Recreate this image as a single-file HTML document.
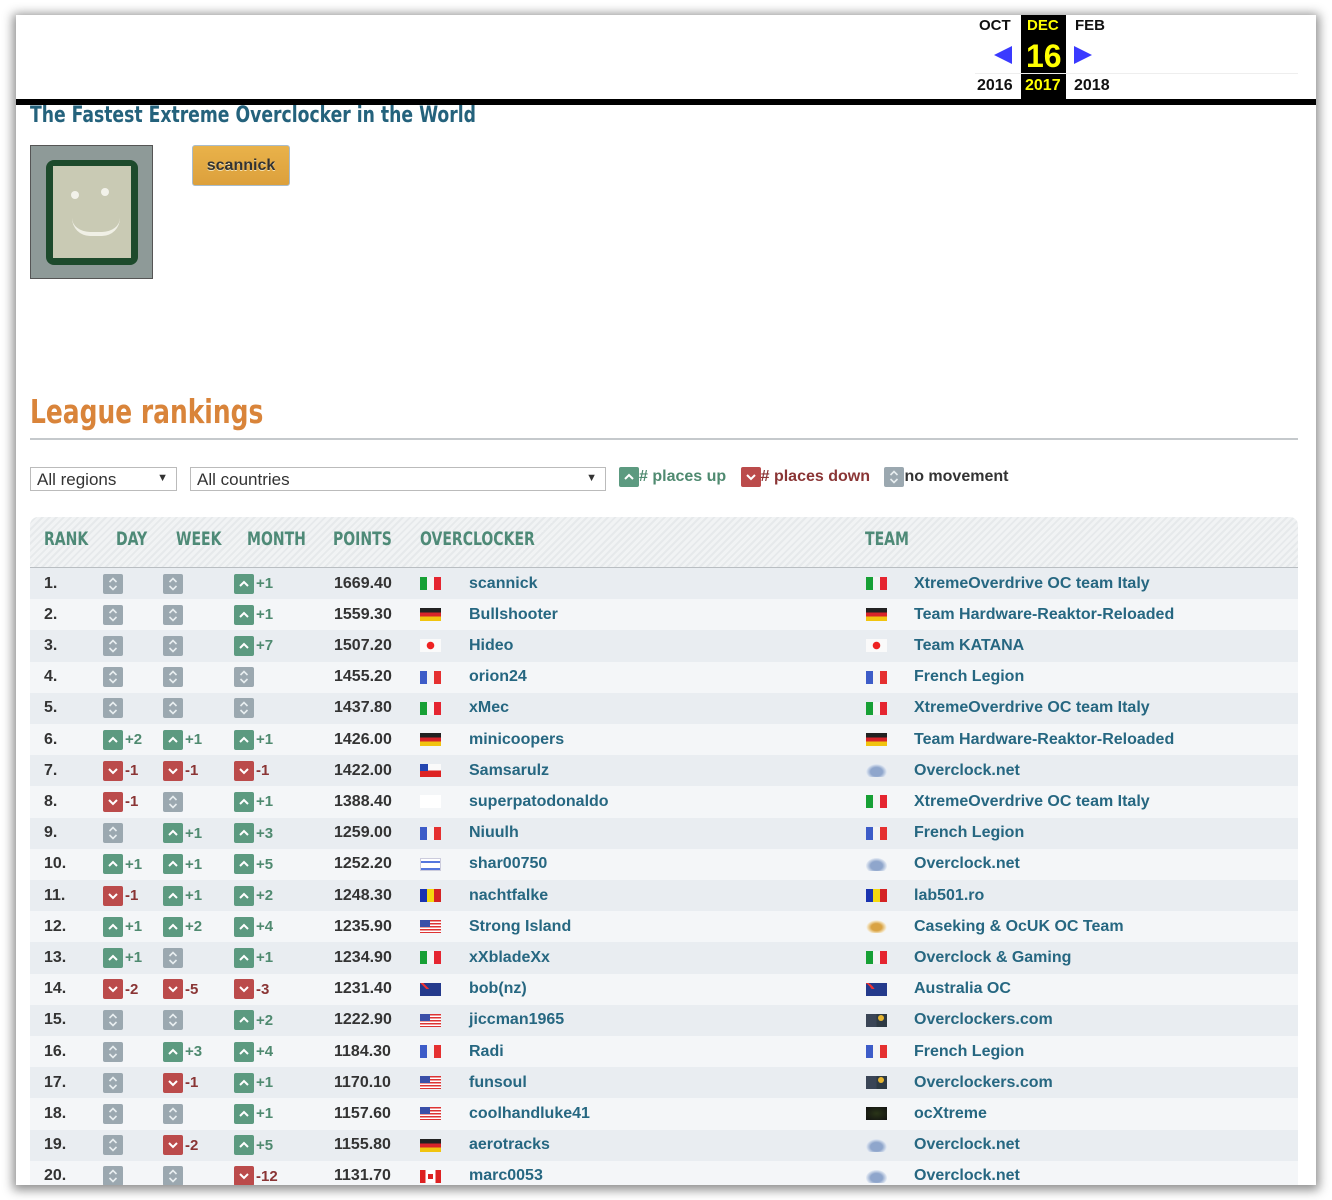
<!DOCTYPE html>
<html><head><meta charset="utf-8"><style>
*{box-sizing:border-box;margin:0;padding:0}
body{width:1332px;height:1200px;background:#fff;position:relative;overflow:hidden;font-family:"Liberation Sans",sans-serif}
.card{position:absolute;left:16px;top:15px;width:1300px;height:1170px;background:#fff;box-shadow:0 2px 10px 3px rgba(0,0,0,.45);overflow:hidden}
.a{position:absolute}
.cond{font-family:"DejaVu Sans Condensed","DejaVu Sans",sans-serif;font-weight:bold;transform-origin:left top;white-space:nowrap}
.hd{font-size:19px;color:#4e8a77;transform:scaleX(.82);top:513px}
.row{position:absolute;left:14px;width:1268px;height:31.2px;font-size:16px;font-weight:bold;color:#333}
.row>*{position:absolute;top:50%;transform:translateY(-50%);white-space:nowrap}
.row>.fl{top:9px;transform:none}
.odd{background:#e9edf1}.even{background:#f4f6f8}
.ic{width:20px;height:20px;border-radius:2px;display:inline-block;vertical-align:middle}
.n{background:#9ba8b0}.u{background:#5c9a80}.d{background:#bb4b4b}
.ic svg{display:block}
.dt{font-size:15px;font-weight:bold;margin-left:2px;vertical-align:middle}
.up{color:#4f8a70}.dn{color:#8a3535}
.lk{color:#266781}
.fl{width:21px;height:13px;display:block}
.it{background:linear-gradient(90deg,#17a035 33%,#f4f4f4 33% 66%,#e52530 66%)}
.de{background:linear-gradient(#222 33%,#d8242a 33% 66%,#f1c40f 66%)}
.jp{background:radial-gradient(circle,#e22 3.5px,#fafafa 4px)}
.fr{background:linear-gradient(90deg,#3d5cc8 33%,#f4f4f4 33% 66%,#e53030 66%)}
.cl{background:linear-gradient(#fafafa 50%,#d22 50%)}
.cl::before{content:"";position:absolute;left:0;top:0;width:8px;height:7px;background:#2345b0}
.il{background:linear-gradient(#fff 2px,#5577dd 2px 4px,#fff 4px 9px,#5577dd 9px 11px,#fff 11px);border:1px solid #ccd}
.ro{background:linear-gradient(90deg,#1a33b0 33%,#f5d90f 33% 66%,#d42323 66%)}
.us{background:repeating-linear-gradient(#d33 0 1.5px,#fff 1.5px 3px)}
.us::before{content:"";position:absolute;left:0;top:0;width:10px;height:7px;background:#3a4fa8}
.au{background:#243a8c}
.au::before{content:"";position:absolute;left:0;top:0;width:9px;height:6px;background:linear-gradient(45deg,#243a8c 40%,#e33 40% 60%,#243a8c 60%)}
.ca{background:linear-gradient(90deg,#d22 25%,#fff 25% 75%,#d22 75%)}
.ca::before{content:"";position:absolute;left:8px;top:4px;width:5px;height:5px;background:#d22}
.ocn{background:radial-gradient(ellipse at 50% 60%,#8fa6cc 40%,#e6ecf4 70%,transparent 72%)}
.ck{background:radial-gradient(ellipse at 50% 55%,#d9a344 35%,#f3e2bd 60%,transparent 70%)}
.oc{background:linear-gradient(90deg,#3a4556 50%,#2e3a44 50%)}
.oc::before{content:"";position:absolute;left:12px;top:1px;width:6px;height:6px;border-radius:50%;background:#e6b530}
.ocx{background:#111 radial-gradient(#2a3518,#111)}
.c1{left:14px}.c2{left:73px}.c3{left:133px}.c4{left:204px}.c5{left:304px}.c6{left:390px}.c7{left:439px}.c8{left:836px}.c9{left:884px}
</style></head><body>
<svg width="0" height="0" style="position:absolute"><defs>
<symbol id="su" viewBox="0 0 20 20"><path d="M6 12 L10 8 L14 12" fill="none" stroke="#fff" stroke-width="2"/></symbol>
<symbol id="sd" viewBox="0 0 20 20"><path d="M6 8 L10 12 L14 8" fill="none" stroke="#fff" stroke-width="2"/></symbol>
<symbol id="sn" viewBox="0 0 20 20"><path d="M6.5 8 L10 4.5 L13.5 8 M6.5 12 L10 15.5 L13.5 12" fill="none" stroke="#e8eef0" stroke-width="1.6"/></symbol>
</defs></svg>
<div class="card">
  <div class="a" style="left:1005px;top:0;width:45px;height:84px;background:#000"></div>
  <div class="a" style="left:959px;top:58px;width:323px;height:1px;background:#eee"></div>
  <div class="a" style="left:963px;top:2px;font:bold 15px 'Liberation Sans',sans-serif;color:#111">OCT</div>
  <div class="a" style="left:1011px;top:2px;font:bold 15px 'Liberation Sans',sans-serif;color:#ff0">DEC</div>
  <div class="a" style="left:1059px;top:2px;font:bold 15px 'Liberation Sans',sans-serif;color:#111">FEB</div>
  <svg class="a" style="left:978px;top:30px" width="20" height="20"><path d="M0 10 L18 1 L18 19Z" fill="#3a3aff"/></svg>
  <svg class="a" style="left:1058px;top:30px" width="20" height="20"><path d="M18 10 L0 1 L0 19Z" fill="#3a3aff"/></svg>
  <div class="a" style="left:1010px;top:23px;font:bold 32px 'Liberation Sans',sans-serif;color:#ff0">16</div>
  <div class="a" style="left:961px;top:62px;font:bold 16px 'Liberation Sans',sans-serif;color:#111">2016</div>
  <div class="a" style="left:1009px;top:62px;font:bold 16px 'Liberation Sans',sans-serif;color:#ff0">2017</div>
  <div class="a" style="left:1058px;top:62px;font:bold 16px 'Liberation Sans',sans-serif;color:#111">2018</div>
  <div class="a" style="left:0;top:84px;width:1300px;height:6px;background:#000"></div>

  <div class="a cond" style="left:14px;top:88px;font-size:22px;color:#24627c;transform:scaleX(.87)">The Fastest Extreme Overclocker in the World</div>
  <div class="a" style="left:14px;top:130px;width:123px;height:134px;background:#8e9a98;border:1px solid #555">
    <div class="a" style="left:15px;top:14px;width:92px;height:105px;background:#1d4a2c;border-radius:8px"></div>
    <div class="a" style="left:22px;top:20px;width:78px;height:92px;background:#c9cab4"></div>
    <div class="a" style="left:40px;top:45px;width:8px;height:8px;border-radius:50%;background:#f2f2ea"></div>
    <div class="a" style="left:70px;top:42px;width:8px;height:8px;border-radius:50%;background:#f2f2ea"></div>
    <div class="a" style="left:41px;top:72px;width:48px;height:18px;border-bottom:4px solid #f0f0e6;border-radius:0 0 30px 30px"></div>
  </div>
  <div class="a" style="left:176px;top:130px;width:98px;height:41px;background:linear-gradient(#e9b24a,#dca03c);border:1px solid #a9bccb;border-radius:3px;font:bold 16px 'Liberation Sans',sans-serif;color:#333;text-align:center;line-height:39px;text-shadow:0 1px 0 #f5e2b0">scannick</div>

  <div class="a cond" style="left:14px;top:377px;font-size:33px;color:#d9843a;transform:scaleX(.84)">League rankings</div>
  <div class="a" style="left:14px;top:423px;width:1268px;height:2px;background:#c5c9cc"></div>

  <div class="a" style="left:14px;top:452px;width:147px;height:24px;border:1px solid #bbb;font-size:17px;color:#333;padding:2px 6px">All regions<span style="position:absolute;right:8px;top:4px;font-size:11px">▼</span></div>
  <div class="a" style="left:174px;top:452px;width:416px;height:24px;border:1px solid #bbb;font-size:17px;color:#333;padding:2px 6px">All countries<span style="position:absolute;right:8px;top:4px;font-size:11px">▼</span></div>
  <div class="a" style="left:603px;top:452px;font-size:16px;font-weight:bold;white-space:nowrap">
    <span class="ic u"><svg width="20" height="20"><use href="#su"/></svg></span><span class="up" style="vertical-align:middle"># places up</span>
    <span class="ic d" style="margin-left:10px"><svg width="20" height="20"><use href="#sd"/></svg></span><span class="dn" style="vertical-align:middle"># places down</span>
    <span class="ic n" style="margin-left:10px"><svg width="20" height="20"><use href="#sn"/></svg></span><span style="color:#333;vertical-align:middle">no movement</span>
  </div>

  <div class="a" style="left:14px;top:502px;width:1268px;height:51px;border-radius:8px 8px 0 0;background:repeating-linear-gradient(135deg,#f1f3f4 0 3px,#e6e9eb 3px 5px);border-bottom:1px solid #b9bec2"></div>
  <div class="a cond hd" style="left:28px">RANK</div>
  <div class="a cond hd" style="left:100px">DAY</div>
  <div class="a cond hd" style="left:160px">WEEK</div>
  <div class="a cond hd" style="left:231px">MONTH</div>
  <div class="a cond hd" style="left:317px">POINTS</div>
  <div class="a cond hd" style="left:404px">OVERCLOCKER</div>
  <div class="a cond hd" style="left:849px">TEAM</div>

<div class="row odd" style="top:553px"><span class="c1">1.</span><span class="c2"><span class="ic n"><svg width="20" height="20"><use href="#sn"/></svg></span></span><span class="c3"><span class="ic n"><svg width="20" height="20"><use href="#sn"/></svg></span></span><span class="c4"><span class="ic u"><svg width="20" height="20"><use href="#su"/></svg></span><span class="dt up">+1</span></span><span class="c5">1669.40</span><span class="c6 fl it"></span><span class="c7 lk">scannick</span><span class="c8 fl it"></span><span class="c9 lk">XtremeOverdrive OC team Italy</span></div>
<div class="row even" style="top:584.2px"><span class="c1">2.</span><span class="c2"><span class="ic n"><svg width="20" height="20"><use href="#sn"/></svg></span></span><span class="c3"><span class="ic n"><svg width="20" height="20"><use href="#sn"/></svg></span></span><span class="c4"><span class="ic u"><svg width="20" height="20"><use href="#su"/></svg></span><span class="dt up">+1</span></span><span class="c5">1559.30</span><span class="c6 fl de"></span><span class="c7 lk">Bullshooter</span><span class="c8 fl de"></span><span class="c9 lk">Team Hardware-Reaktor-Reloaded</span></div>
<div class="row odd" style="top:615.4px"><span class="c1">3.</span><span class="c2"><span class="ic n"><svg width="20" height="20"><use href="#sn"/></svg></span></span><span class="c3"><span class="ic n"><svg width="20" height="20"><use href="#sn"/></svg></span></span><span class="c4"><span class="ic u"><svg width="20" height="20"><use href="#su"/></svg></span><span class="dt up">+7</span></span><span class="c5">1507.20</span><span class="c6 fl jp"></span><span class="c7 lk">Hideo</span><span class="c8 fl jp"></span><span class="c9 lk">Team KATANA</span></div>
<div class="row even" style="top:646.6px"><span class="c1">4.</span><span class="c2"><span class="ic n"><svg width="20" height="20"><use href="#sn"/></svg></span></span><span class="c3"><span class="ic n"><svg width="20" height="20"><use href="#sn"/></svg></span></span><span class="c4"><span class="ic n"><svg width="20" height="20"><use href="#sn"/></svg></span></span><span class="c5">1455.20</span><span class="c6 fl fr"></span><span class="c7 lk">orion24</span><span class="c8 fl fr"></span><span class="c9 lk">French Legion</span></div>
<div class="row odd" style="top:677.8px"><span class="c1">5.</span><span class="c2"><span class="ic n"><svg width="20" height="20"><use href="#sn"/></svg></span></span><span class="c3"><span class="ic n"><svg width="20" height="20"><use href="#sn"/></svg></span></span><span class="c4"><span class="ic n"><svg width="20" height="20"><use href="#sn"/></svg></span></span><span class="c5">1437.80</span><span class="c6 fl it"></span><span class="c7 lk">xMec</span><span class="c8 fl it"></span><span class="c9 lk">XtremeOverdrive OC team Italy</span></div>
<div class="row even" style="top:709px"><span class="c1">6.</span><span class="c2"><span class="ic u"><svg width="20" height="20"><use href="#su"/></svg></span><span class="dt up">+2</span></span><span class="c3"><span class="ic u"><svg width="20" height="20"><use href="#su"/></svg></span><span class="dt up">+1</span></span><span class="c4"><span class="ic u"><svg width="20" height="20"><use href="#su"/></svg></span><span class="dt up">+1</span></span><span class="c5">1426.00</span><span class="c6 fl de"></span><span class="c7 lk">minicoopers</span><span class="c8 fl de"></span><span class="c9 lk">Team Hardware-Reaktor-Reloaded</span></div>
<div class="row odd" style="top:740.2px"><span class="c1">7.</span><span class="c2"><span class="ic d"><svg width="20" height="20"><use href="#sd"/></svg></span><span class="dt dn">-1</span></span><span class="c3"><span class="ic d"><svg width="20" height="20"><use href="#sd"/></svg></span><span class="dt dn">-1</span></span><span class="c4"><span class="ic d"><svg width="20" height="20"><use href="#sd"/></svg></span><span class="dt dn">-1</span></span><span class="c5">1422.00</span><span class="c6 fl cl"></span><span class="c7 lk">Samsarulz</span><span class="c8 fl ocn"></span><span class="c9 lk">Overclock.net</span></div>
<div class="row even" style="top:771.4px"><span class="c1">8.</span><span class="c2"><span class="ic d"><svg width="20" height="20"><use href="#sd"/></svg></span><span class="dt dn">-1</span></span><span class="c3"><span class="ic n"><svg width="20" height="20"><use href="#sn"/></svg></span></span><span class="c4"><span class="ic u"><svg width="20" height="20"><use href="#su"/></svg></span><span class="dt up">+1</span></span><span class="c5">1388.40</span><span class="c6 fl" style="background:#fff"></span><span class="c7 lk">superpatodonaldo</span><span class="c8 fl it"></span><span class="c9 lk">XtremeOverdrive OC team Italy</span></div>
<div class="row odd" style="top:802.6px"><span class="c1">9.</span><span class="c2"><span class="ic n"><svg width="20" height="20"><use href="#sn"/></svg></span></span><span class="c3"><span class="ic u"><svg width="20" height="20"><use href="#su"/></svg></span><span class="dt up">+1</span></span><span class="c4"><span class="ic u"><svg width="20" height="20"><use href="#su"/></svg></span><span class="dt up">+3</span></span><span class="c5">1259.00</span><span class="c6 fl fr"></span><span class="c7 lk">Niuulh</span><span class="c8 fl fr"></span><span class="c9 lk">French Legion</span></div>
<div class="row even" style="top:833.8px"><span class="c1">10.</span><span class="c2"><span class="ic u"><svg width="20" height="20"><use href="#su"/></svg></span><span class="dt up">+1</span></span><span class="c3"><span class="ic u"><svg width="20" height="20"><use href="#su"/></svg></span><span class="dt up">+1</span></span><span class="c4"><span class="ic u"><svg width="20" height="20"><use href="#su"/></svg></span><span class="dt up">+5</span></span><span class="c5">1252.20</span><span class="c6 fl il"></span><span class="c7 lk">shar00750</span><span class="c8 fl ocn"></span><span class="c9 lk">Overclock.net</span></div>
<div class="row odd" style="top:865px"><span class="c1">11.</span><span class="c2"><span class="ic d"><svg width="20" height="20"><use href="#sd"/></svg></span><span class="dt dn">-1</span></span><span class="c3"><span class="ic u"><svg width="20" height="20"><use href="#su"/></svg></span><span class="dt up">+1</span></span><span class="c4"><span class="ic u"><svg width="20" height="20"><use href="#su"/></svg></span><span class="dt up">+2</span></span><span class="c5">1248.30</span><span class="c6 fl ro"></span><span class="c7 lk">nachtfalke</span><span class="c8 fl ro"></span><span class="c9 lk">lab501.ro</span></div>
<div class="row even" style="top:896.2px"><span class="c1">12.</span><span class="c2"><span class="ic u"><svg width="20" height="20"><use href="#su"/></svg></span><span class="dt up">+1</span></span><span class="c3"><span class="ic u"><svg width="20" height="20"><use href="#su"/></svg></span><span class="dt up">+2</span></span><span class="c4"><span class="ic u"><svg width="20" height="20"><use href="#su"/></svg></span><span class="dt up">+4</span></span><span class="c5">1235.90</span><span class="c6 fl us"></span><span class="c7 lk">Strong Island</span><span class="c8 fl ck"></span><span class="c9 lk">Caseking &amp; OcUK OC Team</span></div>
<div class="row odd" style="top:927.4px"><span class="c1">13.</span><span class="c2"><span class="ic u"><svg width="20" height="20"><use href="#su"/></svg></span><span class="dt up">+1</span></span><span class="c3"><span class="ic n"><svg width="20" height="20"><use href="#sn"/></svg></span></span><span class="c4"><span class="ic u"><svg width="20" height="20"><use href="#su"/></svg></span><span class="dt up">+1</span></span><span class="c5">1234.90</span><span class="c6 fl it"></span><span class="c7 lk">xXbladeXx</span><span class="c8 fl it"></span><span class="c9 lk">Overclock &amp; Gaming</span></div>
<div class="row even" style="top:958.6px"><span class="c1">14.</span><span class="c2"><span class="ic d"><svg width="20" height="20"><use href="#sd"/></svg></span><span class="dt dn">-2</span></span><span class="c3"><span class="ic d"><svg width="20" height="20"><use href="#sd"/></svg></span><span class="dt dn">-5</span></span><span class="c4"><span class="ic d"><svg width="20" height="20"><use href="#sd"/></svg></span><span class="dt dn">-3</span></span><span class="c5">1231.40</span><span class="c6 fl au"></span><span class="c7 lk">bob(nz)</span><span class="c8 fl au"></span><span class="c9 lk">Australia OC</span></div>
<div class="row odd" style="top:989.8px"><span class="c1">15.</span><span class="c2"><span class="ic n"><svg width="20" height="20"><use href="#sn"/></svg></span></span><span class="c3"><span class="ic n"><svg width="20" height="20"><use href="#sn"/></svg></span></span><span class="c4"><span class="ic u"><svg width="20" height="20"><use href="#su"/></svg></span><span class="dt up">+2</span></span><span class="c5">1222.90</span><span class="c6 fl us"></span><span class="c7 lk">jiccman1965</span><span class="c8 fl oc"></span><span class="c9 lk">Overclockers.com</span></div>
<div class="row even" style="top:1021px"><span class="c1">16.</span><span class="c2"><span class="ic n"><svg width="20" height="20"><use href="#sn"/></svg></span></span><span class="c3"><span class="ic u"><svg width="20" height="20"><use href="#su"/></svg></span><span class="dt up">+3</span></span><span class="c4"><span class="ic u"><svg width="20" height="20"><use href="#su"/></svg></span><span class="dt up">+4</span></span><span class="c5">1184.30</span><span class="c6 fl fr"></span><span class="c7 lk">Radi</span><span class="c8 fl fr"></span><span class="c9 lk">French Legion</span></div>
<div class="row odd" style="top:1052.2px"><span class="c1">17.</span><span class="c2"><span class="ic n"><svg width="20" height="20"><use href="#sn"/></svg></span></span><span class="c3"><span class="ic d"><svg width="20" height="20"><use href="#sd"/></svg></span><span class="dt dn">-1</span></span><span class="c4"><span class="ic u"><svg width="20" height="20"><use href="#su"/></svg></span><span class="dt up">+1</span></span><span class="c5">1170.10</span><span class="c6 fl us"></span><span class="c7 lk">funsoul</span><span class="c8 fl oc"></span><span class="c9 lk">Overclockers.com</span></div>
<div class="row even" style="top:1083.4px"><span class="c1">18.</span><span class="c2"><span class="ic n"><svg width="20" height="20"><use href="#sn"/></svg></span></span><span class="c3"><span class="ic n"><svg width="20" height="20"><use href="#sn"/></svg></span></span><span class="c4"><span class="ic u"><svg width="20" height="20"><use href="#su"/></svg></span><span class="dt up">+1</span></span><span class="c5">1157.60</span><span class="c6 fl us"></span><span class="c7 lk">coolhandluke41</span><span class="c8 fl ocx"></span><span class="c9 lk">ocXtreme</span></div>
<div class="row odd" style="top:1114.6px"><span class="c1">19.</span><span class="c2"><span class="ic n"><svg width="20" height="20"><use href="#sn"/></svg></span></span><span class="c3"><span class="ic d"><svg width="20" height="20"><use href="#sd"/></svg></span><span class="dt dn">-2</span></span><span class="c4"><span class="ic u"><svg width="20" height="20"><use href="#su"/></svg></span><span class="dt up">+5</span></span><span class="c5">1155.80</span><span class="c6 fl de"></span><span class="c7 lk">aerotracks</span><span class="c8 fl ocn"></span><span class="c9 lk">Overclock.net</span></div>
<div class="row even" style="top:1145.8px"><span class="c1">20.</span><span class="c2"><span class="ic n"><svg width="20" height="20"><use href="#sn"/></svg></span></span><span class="c3"><span class="ic n"><svg width="20" height="20"><use href="#sn"/></svg></span></span><span class="c4"><span class="ic d"><svg width="20" height="20"><use href="#sd"/></svg></span><span class="dt dn">-12</span></span><span class="c5">1131.70</span><span class="c6 fl ca"></span><span class="c7 lk">marc0053</span><span class="c8 fl ocn"></span><span class="c9 lk">Overclock.net</span></div>
</div>
</body></html>
